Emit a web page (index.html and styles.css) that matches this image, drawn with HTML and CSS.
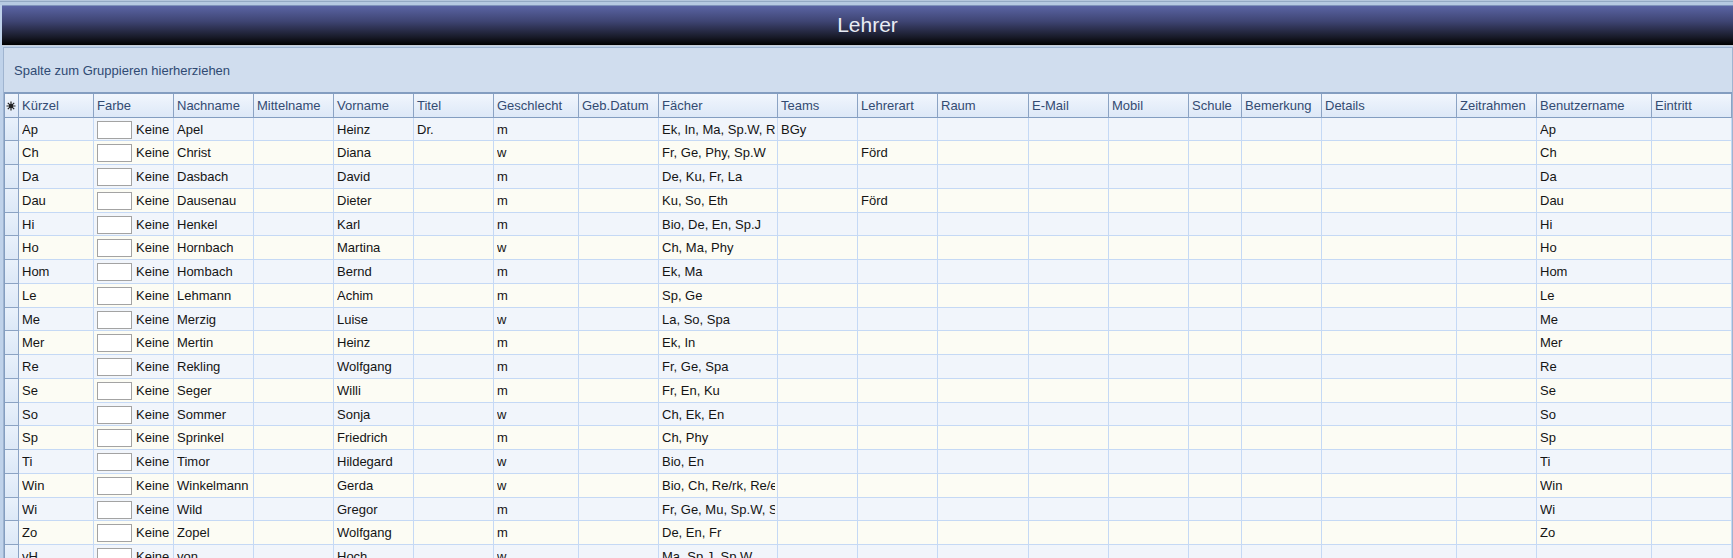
FILE: index.html
```html
<!DOCTYPE html>
<html lang="de">
<head>
<meta charset="utf-8">
<title>Lehrer</title>
<link rel="stylesheet" href="styles.css">
</head>
<body>
<div class="toolbar-edge"></div>
<main class="window">
<header class="banner"><h1 class="banner-title">Lehrer</h1></header>
<section class="grid">
<div class="group-panel">Spalte zum Gruppieren hierherziehen</div>
<table class="data">
<colgroup>
<col class="w-mark"><col class="w-short"><col class="w-std"><col class="w-std"><col class="w-std"><col class="w-std"><col class="w-std"><col class="w-gender"><col class="w-std"><col class="w-subjects"><col class="w-std"><col class="w-std"><col class="w-room"><col class="w-std"><col class="w-std"><col class="w-school"><col class="w-std"><col class="w-details"><col class="w-std"><col class="w-user"><col class="w-std">
</colgroup>
<thead>
<tr>
<th class="mark" scope="col"><svg class="star" viewBox="0 0 10 10" aria-label="Spaltenauswahl"><path d="M5 0.5V9.5M0.5 5H9.5M1.8 1.8L8.2 8.2M8.2 1.8L1.8 8.2"/><circle cx="5" cy="5" r="1.5"/></svg></th>
<th scope="col">Kürzel</th><th scope="col">Farbe</th><th scope="col">Nachname</th><th scope="col">Mittelname</th><th scope="col">Vorname</th><th scope="col">Titel</th><th scope="col">Geschlecht</th><th scope="col">Geb.Datum</th><th scope="col">Fächer</th><th scope="col">Teams</th><th scope="col">Lehrerart</th><th scope="col">Raum</th><th scope="col">E-Mail</th><th scope="col">Mobil</th><th scope="col">Schule</th><th scope="col">Bemerkung</th><th scope="col">Details</th><th scope="col">Zeitrahmen</th><th scope="col">Benutzername</th><th scope="col">Eintritt</th>
</tr>
</thead>
<tbody id="rows"></tbody>
</table>
</section>
</main>
<script src="rows.js"></script>
</body>
</html>
```
FILE: styles.css
```css
* { box-sizing: border-box; }

body {
  margin: 0;
  height: 100vh;
  overflow: hidden;
  background: #bfd2ea;
  color: #141414;
  font: 13px/16px "Liberation Sans", Arial, sans-serif;
}

.toolbar-edge {
  height: 5px;
  background: linear-gradient(#b4c6dc 1px, #93a9c4 1px, #93a9c4 2px, #b6cae2 2px);
}

.window { padding-left: 2px; }

.banner {
  display: flex;
  align-items: center;
  justify-content: center;
  height: 41px;
  padding-bottom: 2px;
  border-top: 1px solid #7f93bb;
  border-bottom: 1px solid #c6cdd6;
  background: linear-gradient(#5a64a4, #3e4472 40%, #181a28 80%, #000);
}

.banner-title {
  margin: 0;
  color: #e8ecf4;
  font-size: 21px;
  font-weight: 400;
  line-height: 24px;
}

.grid {
  margin: 1px 0 0 1px;
  border: 1px solid #9fb4d0;
  border-bottom: 0;
}

.group-panel {
  height: 46px;
  padding: 15px 10px;
  border-bottom: 2px solid #839dc0;
  background: #d0ddee;
  color: #2f4a73;
}

.data {
  width: 100%;
  table-layout: fixed;
  border-collapse: separate;
  border-spacing: 0;
  border-left: 1px solid #839dc0;
}

.w-mark { width: 14px; }
.w-short { width: 75px; }
.w-std { width: 80px; }
.w-gender { width: 85px; }
.w-subjects { width: 119px; }
.w-room { width: 91px; }
.w-school { width: 53px; }
.w-details { width: 135px; }
.w-user { width: 115px; }

.data th,
.data td {
  padding: 0 2px 0 3px;
  overflow: hidden;
  text-align: left;
  white-space: nowrap;
}

.data th {
  height: 24px;
  border-right: 1px solid #8ba3c4;
  border-bottom: 1px solid #839dc0;
  background: linear-gradient(#f1f6fd, #dde8f7);
  color: #334b72;
  font-weight: 400;
}

.data td {
  height: 24px;
  padding-top: 1px;
  border-right: 1px solid #c5d9f5;
  border-bottom: 1px solid #c5d9f5;
  background: #f1f5fb;
}

.data tbody tr:nth-child(4n + 1) td { height: 23px; }
.data tbody tr:nth-child(even) td { background: #fcfcf4; }

.data .mark { padding: 0 1px; }

.data tbody tr .mark,
.data tbody tr:nth-child(even) .mark {
  border-color: #8ba3c4;
  background: linear-gradient(#e9f1fb, #dce8f7);
}

.star {
  display: block;
  width: 10px;
  height: 10px;
  fill: #222;
  stroke: #222;
  stroke-width: 1.2;
}

.text { overflow: hidden; }

.color {
  display: flex;
  align-items: center;
  gap: 4px;
}

.swatch {
  flex: none;
  width: 35px;
  height: 18px;
  border: 1px solid #a3a3a3;
  background: #fff;
}
```
FILE: rows.js
```js
// short, last name, first name, title, gender, subjects, teams, teacher type, user name
const teachers = [
  ["Ap", "Apel", "Heinz", "Dr.", "m", "Ek, In, Ma, Sp.W, R", "BGy", "", "Ap"],
  ["Ch", "Christ", "Diana", "", "w", "Fr, Ge, Phy, Sp.W", "", "Förd", "Ch"],
  ["Da", "Dasbach", "David", "", "m", "De, Ku, Fr, La", "", "", "Da"],
  ["Dau", "Dausenau", "Dieter", "", "m", "Ku, So, Eth", "", "Förd", "Dau"],
  ["Hi", "Henkel", "Karl", "", "m", "Bio, De, En, Sp.J", "", "", "Hi"],
  ["Ho", "Hornbach", "Martina", "", "w", "Ch, Ma, Phy", "", "", "Ho"],
  ["Hom", "Hombach", "Bernd", "", "m", "Ek, Ma", "", "", "Hom"],
  ["Le", "Lehmann", "Achim", "", "m", "Sp, Ge", "", "", "Le"],
  ["Me", "Merzig", "Luise", "", "w", "La, So, Spa", "", "", "Me"],
  ["Mer", "Mertin", "Heinz", "", "m", "Ek, In", "", "", "Mer"],
  ["Re", "Rekling", "Wolfgang", "", "m", "Fr, Ge, Spa", "", "", "Re"],
  ["Se", "Seger", "Willi", "", "m", "Fr, En, Ku", "", "", "Se"],
  ["So", "Sommer", "Sonja", "", "w", "Ch, Ek, En", "", "", "So"],
  ["Sp", "Sprinkel", "Friedrich", "", "m", "Ch, Phy", "", "", "Sp"],
  ["Ti", "Timor", "Hildegard", "", "w", "Bio, En", "", "", "Ti"],
  ["Win", "Winkelmann", "Gerda", "", "w", "Bio, Ch, Re/rk, Re/e", "", "", "Win"],
  ["Wi", "Wild", "Gregor", "", "m", "Fr, Ge, Mu, Sp.W, S", "", "", "Wi"],
  ["Zo", "Zopel", "Wolfgang", "", "m", "De, En, Fr", "", "", "Zo"],
  ["vH", "von", "Hoch", "", "w", "Ma, Sp.J, Sp.W", "", "", ""]
];

const cell = (text) => `<td><div class="text">${text}</div></td>`;

document.getElementById("rows").innerHTML = teachers.map(
  ([short, last, first, title, gender, subjects, teams, type, user]) =>
    `<tr><td class="mark"></td>${cell(short)}` +
    `<td><div class="color"><span class="swatch"></span>Keine</div></td>` +
    [last, "", first, title, gender, "", subjects, teams, type,
      "", "", "", "", "", "", "", user, ""].map(cell).join("") +
    "</tr>"
).join("");
```
